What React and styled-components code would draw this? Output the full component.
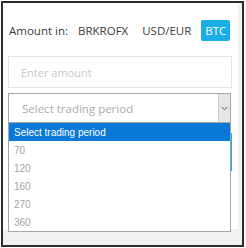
import styled, { createGlobalStyle } from 'styled-components';

const GlobalStyle = createGlobalStyle`
    html, body {
        margin: 0;
        padding: 0;
        background: #ffffff;
    }
    * {
        box-sizing: border-box;
    }
`

const Frame = styled.div`
    margin: 1px 0 0 1px;
    width: 243px;
    height: 246px;
    border: 2px solid #2e2e2e;
    background-color: #f2f2f2;
    padding: 0 4px 16px 0;
    display: flex;
`

const Panel = styled.div`
    flex: 1;
    background-color: #ffffff;
    padding: 17px 6px 0 5px;
    font-family: "Open Sans", "DejaVu Sans", sans-serif;
`

const CurrencyRow = styled.div`
    display: flex;
    align-items: center;
    gap: 6px;
    height: 21px;
`

const Label = styled.span`
    font-size: 11.5px;
    color: #3b3b3b;
    padding-left: 1px;
`

const CurrencyButton = styled.button`
    height: 21px;
    padding: 0 4px;
    border: none;
    border-radius: 2px;
    font-family: inherit;
    font-size: 11.5px;
    color: ${p => p.active ? '#ffffff' : '#3b3b3b'};
    background-color: ${p => p.active ? '#1aaee8' : 'transparent'};
`

const AmountInput = styled.input`
    display: block;
    width: 224px;
    height: 32px;
    margin-top: 15px;
    padding: 0 12px;
    border: 1px solid #e3e3e3;
    outline: none;
    font-family: inherit;
    font-size: 11px;
    color: #333;
    &::placeholder {
        color: #c8c8c8;
    }
`

const SelectWrap = styled.div`
    position: relative;
    margin-top: 5px;
`

const SelectBox = styled.div`
    display: flex;
    align-items: center;
    width: 223px;
    height: 30px;
    border: 1px solid #a6a6a6;
    font-size: 11.5px;
    color: #ababab;
    .select_text{
        flex: 1;
        padding-left: 13px;
    }
    .select_arrow{
        width: 12px;
        height: 100%;
        background-color: #e6e6e6;
        border-left: 1px solid #cfcfcf;
        display: flex;
        align-items: center;
        justify-content: center;
    }
`

const OptionList = styled.ul`
    position: absolute;
    top: 30px;
    left: 0;
    width: 223px;
    margin: 0;
    padding: 0;
    list-style: none;
    background-color: #ffffff;
    border: 1px solid #a6a6a6;
    border-top: none;
    font-family: "Liberation Sans", Arial, sans-serif;
    font-size: 10px;
    z-index: 2;
`

const OptionItem = styled.li`
    height: 18px;
    line-height: 19px;
    padding-left: 5px;
    color: ${p => p.selected ? '#ffffff' : '#a3a3a3'};
    background-color: ${p => p.selected ? '#0a78d7' : 'transparent'};
`

const SubmitButton = styled.button`
    display: block;
    width: 224px;
    height: 38px;
    margin-top: 10px;
    border: none;
    background-color: #1aaee8;
`

const periods = ['70', '120', '160', '270', '360'];

const App = () => {
    return (
        <>
            <GlobalStyle />
            <Frame>
                <Panel>
                    <CurrencyRow>
                        <Label>Amount in:</Label>
                        <CurrencyButton>BRKROFX</CurrencyButton>
                        <CurrencyButton>USD/EUR</CurrencyButton>
                        <CurrencyButton active>BTC</CurrencyButton>
                    </CurrencyRow>
                    <AmountInput type="text" placeholder="Enter amount" />
                    <SelectWrap>
                        <SelectBox>
                            <span className="select_text">Select trading period</span>
                            <span className="select_arrow">
                                <svg width="7" height="5" viewBox="0 0 7 5">
                                    <path d="M0.8 1 L3.5 3.8 L6.2 1" fill="none" stroke="#555" strokeWidth="1" />
                                </svg>
                            </span>
                        </SelectBox>
                        <OptionList>
                            <OptionItem selected>Select trading period</OptionItem>
                            {periods.map(p => <OptionItem key={p}>{p}</OptionItem>)}
                        </OptionList>
                        <SubmitButton />
                    </SelectWrap>
                </Panel>
            </Frame>
        </>
    );
};

export default App;
